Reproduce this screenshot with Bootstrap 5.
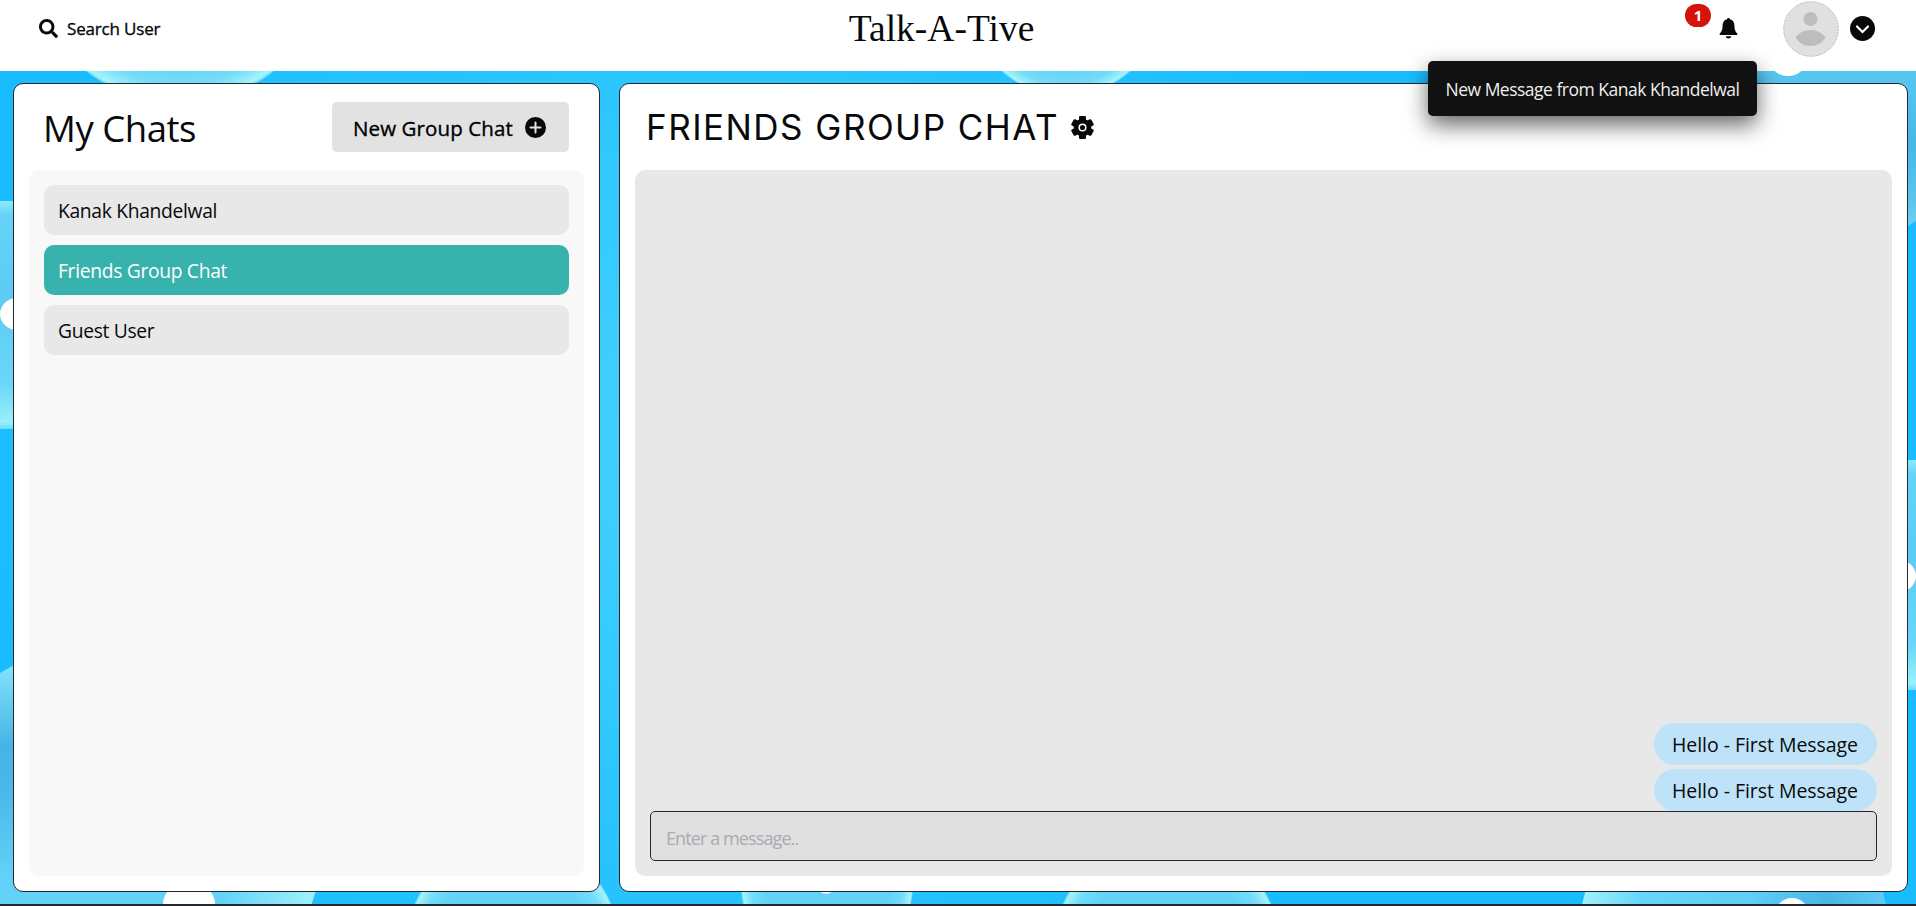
<!DOCTYPE html>
<html lang="en">
<head>
<meta charset="utf-8">
<meta name="viewport" content="width=device-width, initial-scale=1">
<title>Talk-A-Tive</title>
<link href="https://cdn.jsdelivr.net/npm/bootstrap@5.3.0/dist/css/bootstrap.min.css" rel="stylesheet">
<style>
body{height:100vh;overflow:hidden;font-family:"Open Sans","Noto Sans",sans-serif;font-size:20px;line-height:30px;color:#08090b;background:#1cbeff;border-bottom:2px solid #24272b}
.backdrop{z-index:-1}
.topbar{height:71px;flex:none;background:#fff;padding:0 41px 0 39px}
.topbar .side{flex:1 1 0;height:57px}
.search-label{font-size:17px;letter-spacing:-.17px;margin-left:9px;-webkit-text-stroke:.35px}
.brand{font:37.5px/57px "Liberation Serif",serif;margin-right:31px}
.bell-wrap{margin-right:45px}
.profile-pic{margin-right:11px}
.board{padding:12px 8px 12px 13px;gap:19px}
.pane{background:#fff;border:1px solid #24272b;border-radius:10px;padding:0 15px 15px}
.pane-chats{width:587px;flex:none}
.pane-head{height:86px;flex:none}
.my-title{font-size:36.5px;line-height:50px;letter-spacing:-.45px;padding:2px 0 0 14px}
.group-btn{height:50px;width:237px;background:#e2e2e2;border:0;border-radius:5px;margin-right:15px;padding:0 23px 0 21px;font-size:20.5px;letter-spacing:.1px}
.group-btn span{padding-top:2px;-webkit-text-stroke:.35px}
.chat-list{background:#f8f8f8;border-radius:10px;padding:15px;gap:10px}
.chat-item{height:50px;background:#e8e8e8;border-radius:10px;padding:11px 15px 9px 14px;font-size:19.3px;letter-spacing:-.33px}
.chat-item.active{background:#38b2ac;color:#fff}
.room-title{font:35px/50px Inter,sans-serif;letter-spacing:1.47px;padding-left:11px;margin-right:12px}
.room{background:#e8e8e8;border-radius:10px;padding:15px}
.bubble{background:#bee3f8;border-radius:25px;padding:7px 19px 5px 18px;height:42px;font-size:19.5px;letter-spacing:-.05px}
.msg-input{height:50px;background:#e0e0e0;border:1px solid #24272b;border-radius:5px;padding:3px 15px 0;font-size:18px;letter-spacing:-.9px}
.msg-input::placeholder{color:#a9abb2;opacity:1}
.count{left:-34px;top:-14px;width:26px;height:23px;border-radius:12px;background:#d5120c;color:#fff;font:700 15px/22px "Open Sans",sans-serif}
.toast-note{left:1428px;top:61px;width:329px;height:55px;border-radius:5px;background:#111;color:#eee;font-size:17.5px;letter-spacing:-.5px;box-shadow:0 9px 22px rgba(0,0,0,.6)}
</style>
</head>
<body class="d-flex flex-column position-relative">
<svg class="backdrop position-absolute top-0 start-0 w-100 h-100" viewBox="0 0 1916 904" preserveAspectRatio="none" aria-hidden="true">
<defs>
<radialGradient id="base" gradientUnits="userSpaceOnUse" cx="700" cy="440" r="720"><stop offset="0" stop-color="#46d2ff"/><stop offset=".55" stop-color="#2ac4ff"/><stop offset="1" stop-color="#19bdff"/></radialGradient>
<radialGradient id="rim"><stop offset=".72" stop-color="#63d2f8"/><stop offset=".88" stop-color="#74dcf8"/><stop offset=".98" stop-color="#a4f4fa"/><stop offset="1" stop-color="#6cdcfb"/></radialGradient>
<linearGradient id="side" x1="0" y1="0" x2="0" y2="1"><stop offset="0" stop-color="#8feafa"/><stop offset=".06" stop-color="#66d2f7"/><stop offset=".4" stop-color="#5ccbf5"/><stop offset=".8" stop-color="#6ad6f8"/><stop offset=".97" stop-color="#9af0fa"/><stop offset="1" stop-color="#6cdcfb"/></linearGradient>
<linearGradient id="deep" x1="0" y1="0" x2="0" y2="1"><stop offset="0" stop-color="#7fdff8"/><stop offset=".12" stop-color="#7fdff8"/><stop offset=".4" stop-color="#45b4e6"/><stop offset=".55" stop-color="#49b7e8"/><stop offset=".9" stop-color="#63d2f8"/></linearGradient>
<linearGradient id="bottom" x1="0" x2="1"><stop offset="0" stop-color="#a5f3f8"/><stop offset=".2" stop-color="#68d6fa"/><stop offset=".55" stop-color="#60cef5"/><stop offset=".8" stop-color="#4bb5e8"/><stop offset="1" stop-color="#62cdf4"/></linearGradient>
<linearGradient id="corner" x1="0" y1="0" x2="0" y2="1"><stop offset=".4" stop-color="#58c8f2"/><stop offset=".65" stop-color="#48b6e8"/><stop offset=".85" stop-color="#5dc6ee"/><stop offset="1" stop-color="#80dcf5"/></linearGradient>
<linearGradient id="llb" gradientUnits="userSpaceOnUse" x1="0" x2="315" y1="0" y2="0"><stop offset=".7" stop-color="#63d2f8"/><stop offset="1" stop-color="#a0f2fa"/></linearGradient>
</defs>
<rect width="1916" height="904" fill="url(#base)"/>
<circle cx="180" cy="-52" r="155" fill="url(#rim)"/>
<circle cx="1066" cy="0" r="96" fill="url(#rim)"/>
<rect x="-60" y="201" width="160" height="228" rx="60" fill="url(#side)"/>
<ellipse cx="17" cy="314" rx="17" ry="16" fill="#fff"/>
<path d="M0 673Q60 635 140 640Q330 670 316 892L311 906H0Z" fill="url(#deep)"/>
<path d="M60 892H315L311 906H60Z" fill="url(#llb)"/>
<ellipse cx="189" cy="904" rx="26" ry="22" fill="#fff"/>
<circle cx="513" cy="946" r="107" fill="url(#rim)"/>
<circle cx="827" cy="885" r="86" fill="url(#rim)"/>
<circle cx="826" cy="884" r="10" fill="#eafcff"/>
<circle cx="1167" cy="950" r="114" fill="url(#rim)"/>
<circle cx="1734" cy="935" r="155" fill="url(#bottom)"/>
<circle cx="1792" cy="915" r="17" fill="#fff"/>
<circle cx="1830" cy="99" r="149" fill="url(#corner)"/>
<circle cx="1788" cy="55" r="21" fill="#fff"/>
<rect x="1850" y="460" width="130" height="230" rx="40" fill="url(#side)"/>
<ellipse cx="1899" cy="576" rx="17" ry="16" fill="#fff"/>
</svg>

<header class="topbar d-flex align-items-start">
<div class="side d-flex align-items-center">
<svg width="19" height="19" viewBox="0 0 512 512" fill="currentColor"><path d="M505 442.700 405.300 343c-4.500-4.500-10.600-7-17-7H372c27.600-35.300 44-79.700 44-128C416 93.100 322.900 0 208 0S0 93.100 0 208s93.100 208 208 208c48.300 0 92.700-16.400 128-44v16.300c0 6.400 2.500 12.500 7 17l99.700 99.700c9.400 9.400 24.600 9.400 33.900 0l28.300-28.300c9.400-9.400 9.400-24.600.1-34zM208 336c-70.700 0-128-57.200-128-128 0-70.700 57.200-128 128-128 70.700 0 128 57.200 128 128 0 70.700-57.200 128-128 128z"/></svg>
<span class="search-label">Search User</span>
</div>
<div class="brand">Talk-A-Tive</div>
<div class="side d-flex align-items-center justify-content-end">
<div class="bell-wrap position-relative d-flex"><svg width="19" height="21" viewBox="0 0 19 21" fill="currentColor"><path d="M9.500 0c-.8 0-1.400.6-1.400 1.300C5 2 3.600 4.500 3.600 7.500c0 4-.9 6-2.800 8.100-.6.700-.2 1.400.6 1.400h16.200c.8 0 1.200-.7.600-1.400-1.900-2.100-2.800-4.100-2.800-8.100 0-3-1.400-5.500-4.500-6.200C10.900.6 10.300 0 9.500 0zM6.800 18.300h5.400C12 19.700 10.900 20.500 9.500 20.500S7 19.700 6.800 18.300z"/></svg><span class="count position-absolute text-center">1</span></div>
<svg class="profile-pic" width="56" height="56" viewBox="0 0 56 56"><circle cx="28" cy="28" r="27.300" fill="#e0e0e0" stroke="#aaa" stroke-width=".8" stroke-dasharray="2 1"/><circle cx="27.500" cy="18" r="7" fill="#bdbdbd"/><path d="M12.500 36.500c3-4.500 8.500-7.500 15-7.500s12 3 15 7.500c-3 5-8.500 8.500-15 8.500s-12-3.500-15-8.500z" fill="#bdbdbd"/></svg>
<svg width="25" height="25" viewBox="0 0 25 25"><circle cx="12.500" cy="12.500" r="12.500" fill="#08090b"/><path d="m7 10.500 5.500 5.500 5.500-5.500" fill="none" stroke="#fff" stroke-width="2.200" stroke-linecap="round"/></svg>
</div>
</header>

<main class="board d-flex flex-grow-1">
<section class="pane pane-chats d-flex flex-column">
<div class="pane-head d-flex align-items-center justify-content-between">
<div class="my-title">My Chats</div>
<button class="group-btn d-flex align-items-center justify-content-between"><span>New Group Chat</span><svg width="21" height="21" viewBox="0 0 21 21"><circle cx="10.500" cy="10.500" r="10.500" fill="#08090b"/><path d="M10.500 5.500v10M5.500 10.500h10" stroke="#e2e2e2" stroke-width="2" stroke-linecap="round"/></svg></button>
</div>
<div class="chat-list d-flex flex-column flex-grow-1">
<div class="chat-item">Kanak Khandelwal</div>
<div class="chat-item active">Friends Group Chat</div>
<div class="chat-item">Guest User</div>
</div>
</section>
<section class="pane d-flex flex-column flex-grow-1">
<div class="pane-head d-flex align-items-center">
<div class="room-title">FRIENDS GROUP CHAT</div>
<svg width="23" height="23" viewBox="0 0 23 23"><g fill="#08090b"><circle cx="11.500" cy="11.500" r="8.800"/><rect x="8" y="0" width="7" height="23" rx="1.300"/><rect x="8" y="0" width="7" height="23" rx="1.300" transform="rotate(60 11.500 11.500)"/><rect x="8" y="0" width="7" height="23" rx="1.300" transform="rotate(120 11.500 11.500)"/></g><circle cx="11.500" cy="11.500" r="3.300" fill="none" stroke="#fff" stroke-width="1.500"/></svg>
</div>
<div class="room d-flex flex-column flex-grow-1 justify-content-end">
<div class="d-flex flex-column align-items-end gap-1"><div class="bubble">Hello - First Message</div><div class="bubble">Hello - First Message</div></div>
<input class="msg-input w-100" placeholder="Enter a message..">
</div>
</section>
</main>
<div class="toast-note position-absolute d-flex align-items-center justify-content-center">New Message from Kanak Khandelwal</div>
<script src="https://cdn.jsdelivr.net/npm/bootstrap@5.3.0/dist/js/bootstrap.bundle.min.js"></script>
</body>
</html>
